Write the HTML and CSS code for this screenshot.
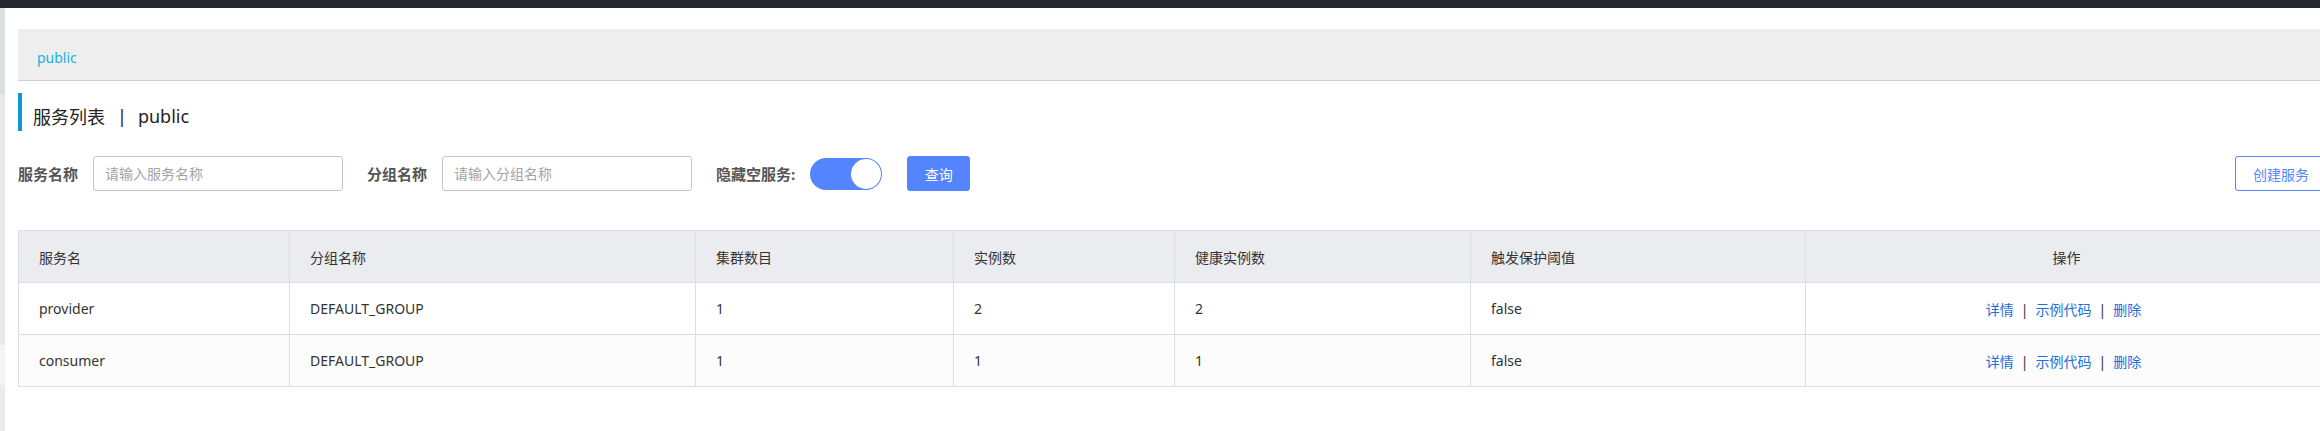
FILE: index.html
```html
<!DOCTYPE html>
<html lang="zh-CN">
<head>
<meta charset="utf-8">
<title>服务列表</title>
<link rel="stylesheet" href="styles.css">
</head>
<body>
<div class="topbar"></div>
<div class="layout">
  <div class="sidebar"></div>
  <main class="main">
    <div class="breadcrumb"><span class="crumb">public</span></div>
    <h1 class="page-title"><span>服务列表</span><span class="title-sep">|</span><span>public</span></h1>
    <div class="filters">
      <label class="filter-label">服务名称</label>
      <input class="filter-input" type="text" placeholder="请输入服务名称">
      <label class="filter-label gap">分组名称</label>
      <input class="filter-input" type="text" placeholder="请输入分组名称">
      <label class="filter-label gap">隐藏空服务:</label>
      <span class="switch"><span class="knob"></span></span>
      <button class="btn btn-primary" type="button">查询</button>
      <button class="btn btn-outline" type="button">创建服务</button>
    </div>
    <table class="grid">
      <colgroup>
        <col class="c1"><col class="c2"><col class="c3"><col class="c4"><col class="c5"><col class="c6"><col class="c7">
      </colgroup>
      <thead>
        <tr>
          <th>服务名</th>
          <th>分组名称</th>
          <th>集群数目</th>
          <th>实例数</th>
          <th>健康实例数</th>
          <th>触发保护阈值</th>
          <th class="center">操作</th>
        </tr>
      </thead>
      <tbody>
        <tr>
          <td>provider</td>
          <td>DEFAULT_GROUP</td>
          <td>1</td>
          <td>2</td>
          <td>2</td>
          <td>false</td>
          <td class="center"><a class="link">详情</a><span class="sep">|</span><a class="link">示例代码</a><span class="sep">|</span><a class="link">删除</a></td>
        </tr>
        <tr class="alt">
          <td>consumer</td>
          <td>DEFAULT_GROUP</td>
          <td>1</td>
          <td>1</td>
          <td>1</td>
          <td>false</td>
          <td class="center"><a class="link">详情</a><span class="sep">|</span><a class="link">示例代码</a><span class="sep">|</span><a class="link">删除</a></td>
        </tr>
      </tbody>
    </table>
  </main>
</div>
</body>
</html>
```
FILE: styles.css
```css
html, body {
  margin: 0;
  padding: 0;
  overflow: hidden;
  background: #fff;
}
body {
  font-family: "Noto Sans", "Noto Sans CJK SC", sans-serif;
  font-size: 14px;
  color: #333;
}
.topbar {
  height: 8px;
  background: #25292e;
}
.layout {
  display: flex;
  align-items: stretch;
  min-height: 423px;
}
.sidebar {
  flex: 0 0 5px;
  background: linear-gradient(to bottom,
    #dcdfe4 0, #dcdfe4 87px,
    #e8eaed 87px, #e8eaed 337px,
    #f3f4f6 337px, #f3f4f6 377px,
    #e9ebee 377px);
}
.main {
  flex: 0 0 2309px;
  width: 2309px;
  padding-left: 13px;
}
.breadcrumb {
  margin-top: 21px;
  height: 52px;
  box-sizing: border-box;
  background: #eeeeee;
  border-bottom: 1px solid #cfcfcf;
  display: flex;
  align-items: center;
  padding-left: 19px;
  padding-top: 5px;
}
.crumb {
  color: #22b2dc;
  font-size: 14px;
}
.page-title {
  margin: 12px 0 0;
  height: 38px;
  border-left: 4px solid #0d9bd6;
  padding-left: 11px;
  font-weight: normal;
  font-size: 18px;
  color: #222;
  display: flex;
  align-items: center;
  padding-top: 8px;
  box-sizing: border-box;
}
.title-sep {
  margin: 0 11px 0 12px;
}
.filters {
  margin-top: 25px;
  display: flex;
  align-items: center;
  height: 35px;
}
.filter-label {
  font-weight: bold;
  color: #555;
  font-size: 15px;
  margin-right: 15px;
}
.filter-label.gap {
  margin-left: 24px;
}
.filter-input {
  width: 250px;
  height: 35px;
  box-sizing: border-box;
  border: 1px solid #c4c6cf;
  border-radius: 3px;
  padding: 0 11px;
  font-family: inherit;
  font-size: 14px;
  color: #333;
  outline: none;
}
.filter-input::placeholder {
  color: #a3a3a3;
}
.switch {
  width: 72px;
  height: 32px;
  box-sizing: border-box;
  border-radius: 16px;
  background: #5584ff;
  display: flex;
  align-items: center;
  justify-content: flex-end;
  padding-right: 1px;
}
.knob {
  width: 30px;
  height: 30px;
  border-radius: 50%;
  background: #fff;
}
.btn {
  height: 35px;
  box-sizing: border-box;
  border-radius: 3px;
  font-family: inherit;
  font-size: 14px;
  padding: 0;
  cursor: pointer;
}
.btn-primary {
  margin-left: 25px;
  width: 63px;
  border: 1px solid #5584ff;
  background: #5584ff;
  color: #fff;
}
.btn-outline {
  margin-left: auto;
  width: 92px;
  border: 1px solid #5584ff;
  background: #fff;
  color: #5584ff;
}
.grid {
  margin-top: 39px;
  width: 2309px;
  table-layout: fixed;
  border-collapse: collapse;
  border: 1px solid #dcdee3;
}
.c1 { width: 271px; }
.c2 { width: 406px; }
.c3 { width: 258px; }
.c4 { width: 221px; }
.c5 { width: 296px; }
.c6 { width: 335px; }
.c7 { width: 522px; }
.grid th, .grid td {
  height: 52px;
  padding: 0 20px;
  border: 1px solid #dcdee3;
  text-align: left;
  font-weight: normal;
  font-size: 14px;
  color: #333;
  box-sizing: border-box;
}
.grid thead th {
  background: #ebecf0;
}
.grid tbody tr {
  background: #fff;
}
.grid tbody tr.alt {
  background: #fcfcfc;
}
.grid .center {
  text-align: center;
}
.grid td.center {
  padding-right: 26px;
}
.link {
  color: #1f6fd8;
  cursor: pointer;
}
.sep {
  color: #333;
  margin: 0 7px;
}
```
